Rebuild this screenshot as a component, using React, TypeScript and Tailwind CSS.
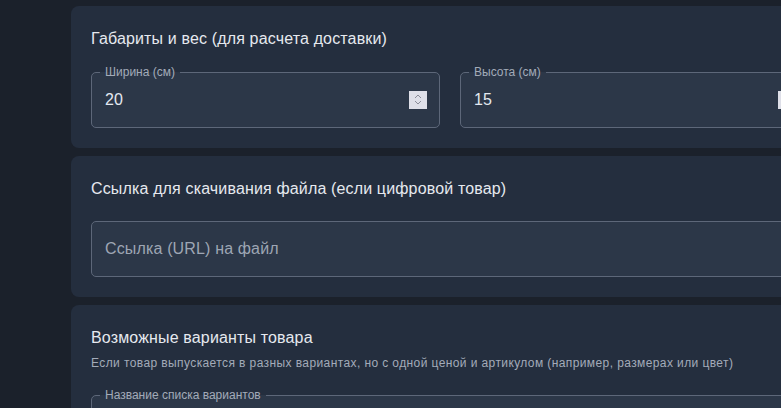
import React from "react";

const font = { fontFamily: '"Liberation Sans", Arial, sans-serif' };

function Spinner() {
  return (
    <div className="w-[18px] h-[18px] bg-[#dedfe8] flex flex-col items-center justify-center gap-[1px] shrink-0">
      <svg width="8" height="5" viewBox="0 0 8 5" fill="none">
        <path d="M1 4 L4 1 L7 4" stroke="#8a8c98" strokeWidth="1" />
      </svg>
      <svg width="8" height="5" viewBox="0 0 8 5" fill="none">
        <path d="M1 1 L4 4 L7 1" stroke="#8a8c98" strokeWidth="1" />
      </svg>
    </div>
  );
}

function NumberField({ label, value }: { label: string; value: string }) {
  return (
    <fieldset className="w-[349px] h-[62px] border border-[#5d6779] rounded-[5px] bg-[#2c3748] pl-[8px] pr-[12px] m-0 min-w-0">
      <legend className="px-[5px] text-[12px] leading-[12px] text-[#a3abb9]">{label}</legend>
      <div className="h-[49px] flex items-center pl-[5px] pb-[6px]">
        <span className="flex-1 text-[16px] tracking-[0.15px] text-[#e3e8f0]">{value}</span>
        <Spinner />
      </div>
    </fieldset>
  );
}

export default function App() {
  return (
    <div className="w-[781px] h-[408px] overflow-hidden bg-[#1b212b] pl-[71px] pt-[6px]" style={font}>
      <div className="w-[758px] flex flex-col gap-[8px]">
        <div className="bg-[#242e3e] rounded-[8px] px-5 pt-5 pb-5">
          <div className="h-[26px] leading-[26px] text-[16px] tracking-[0.15px] text-[#e6e9ef]">
            Габариты и вес (для расчета доставки)
          </div>
          <div className="mt-[14px] flex gap-5">
            <NumberField label="Ширина (см)" value="20" />
            <NumberField label="Высота (см)" value="15" />
          </div>
        </div>

        <div className="bg-[#242e3e] rounded-[8px] px-5 pt-5 pb-5">
          <div className="h-[26px] leading-[26px] text-[16px] tracking-[0.15px] text-[#e6e9ef]">
            Ссылка для скачивания файла (если цифровой товар)
          </div>
          <div className="mt-[19px] h-[56px] border border-[#5d6779] rounded-[5px] bg-[#2c3748] flex items-center px-[13px]">
            <span className="text-[16px] tracking-[0.15px] text-[#9ea6b4]">Ссылка (URL) на файл</span>
          </div>
        </div>

        <div className="bg-[#242e3e] rounded-[8px] px-5 pt-5 pb-5">
          <div className="h-[26px] leading-[26px] text-[16px] tracking-[0.15px] text-[#e6e9ef]">
            Возможные варианты товара
          </div>
          <div className="mt-[3px] h-[18px] leading-[18px] text-[12px] tracking-[0.4px] text-[#a3abb9]">
            Если товар выпускается в разных вариантах, но с одной ценой и артикулом (например, размерах или цвет)
          </div>
          <fieldset className="mt-[17px] h-[62px] border border-[#5d6779] rounded-[5px] bg-[#2c3748] pl-[8px] pr-[12px] m-0 min-w-0">
            <legend className="px-[5px] text-[12px] leading-[12px] text-[#a3abb9]">Название списка вариантов</legend>
          </fieldset>
        </div>
      </div>
    </div>
  );
}
